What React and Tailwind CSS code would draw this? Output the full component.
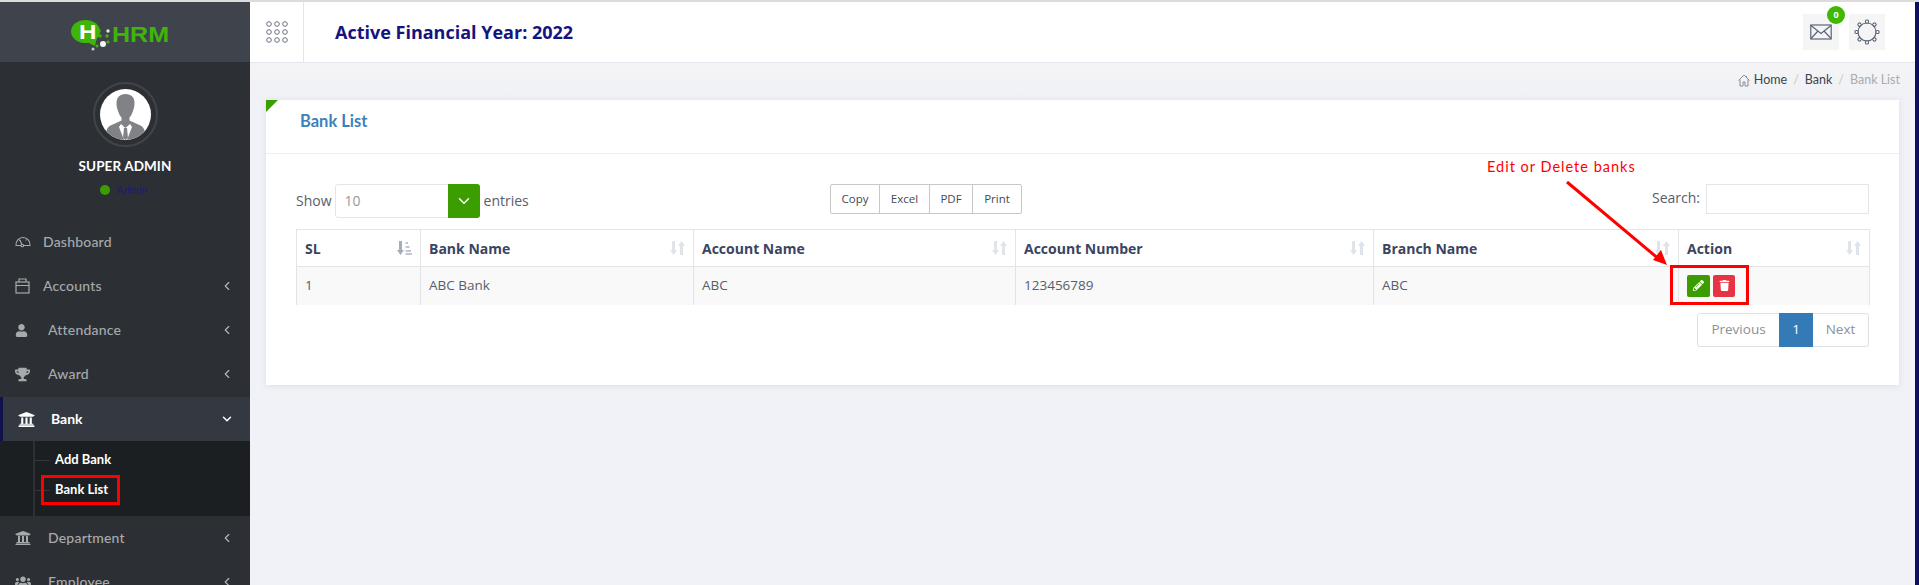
import React from 'react';
import { FaUser, FaTrophy, FaUniversity, FaUsers, FaPencilAlt, FaTrash } from 'react-icons/fa';
import { ChevronLeft, ChevronDown } from 'lucide-react';

const Logo = () => (
  <div className="relative h-[32px] w-[100px]">
    <svg width="100" height="32" viewBox="0 0 100 32" className="absolute left-0 top-0">
      <ellipse cx="14.500" cy="11.500" rx="14.500" ry="11.500" fill="#3fb509" />
      <path d="M12 20 L24 26 L26 17 Z" fill="#3fb509" />
      <circle cx="28" cy="11" r="1.700" fill="#3fb509" />
      <circle cx="37" cy="11" r="1.700" fill="#dfe6da" />
      <circle cx="29" cy="16" r="1.700" fill="#3fb509" />
      <circle cx="36" cy="16" r="1.700" fill="#3fb509" />
      <circle cx="37" cy="22" r="1.600" fill="#3fb509" />
      <circle cx="32" cy="24" r="3" fill="#f4f4f4" />
      <circle cx="22" cy="23" r="1.800" fill="#3fb509" />
      <circle cx="26" cy="26" r="1.500" fill="#3fb509" />
      <circle cx="22" cy="29" r="1.500" fill="#c9c9c9" />
    </svg>
    <span className="absolute left-[8px] top-[2px] text-[21px] leading-[20px] font-bold text-white origin-left scale-x-[1.15] font-['Liberation_Sans',sans-serif]">H</span>
    <span className="absolute left-[41px] top-[3px] text-[22px] leading-[24px] font-bold text-[#3fb509] origin-left scale-x-[1.14] font-['Liberation_Sans',sans-serif]">HRM</span>
  </div>
);

const Avatar = () => (
  <div className="w-[65px] h-[65px] rounded-full border-[2px] border-[#41454a] flex items-center justify-center">
    <div className="w-[51px] h-[51px] rounded-full bg-white overflow-hidden">
      <svg viewBox="0 0 51 51" width="51" height="51">
        <path d="M25.500 5c-6 0-9 3.500-9 9 0 3 .6 5.500 1.500 8 .8 2.500 2 5 3.500 6.500v3l-11 5c-3 1.500-4 4-4.500 8v7h39v-7c-.5-4-1.500-6.500-4.500-8l-11-5v-3c1.500-1.500 2.700-4 3.500-6.500.9-2.500 1.500-5 1.500-8 0-5.500-3-9-9-9z" fill="#808285" />
        <path d="M21 35l4.500 4 4.500-4 2 3-5 13h-3l-5-13z" fill="#fff" />
        <path d="M24 39h3l1 10-2.500 2-2.500-2z" fill="#808285" />
      </svg>
    </div>
  </div>
);

const GaugeIcon = () => (
  <svg width="16" height="16" viewBox="0 0 16 16" fill="none" stroke="#a7aaad" strokeWidth="1.100">
    <path d="M1 11.500C.6 7 3.700 3.500 8 3.500s7.400 3.500 7 8z" />
    <path d="M7 11l-2-5M4 5.500l.7 1M11.500 5.500l-.7 1" />
    <circle cx="7.300" cy="11.500" r="1.300" fill="#2c3034" />
  </svg>
);

const BoxIcon = () => (
  <svg width="15" height="16" viewBox="0 0 15 16" fill="none" stroke="#a7aaad" strokeWidth="1.200">
    <rect x="1" y="4" width="13" height="11" />
    <path d="M1 7.500h13M4 4V1h7v3" />
  </svg>
);

const menuTop = [
  { label: 'Dashboard', icon: <GaugeIcon />, textClass: 'ml-[12px]' },
  { label: 'Accounts', icon: <BoxIcon />, textClass: 'ml-[13px]', arrow: true },
  { label: 'Attendance', icon: <FaUser size={13} color="#a7aaad" />, textClass: 'ml-[20px]', arrow: true },
  { label: 'Award', icon: <FaTrophy size={15} color="#a7aaad" />, textClass: 'ml-[18px]', arrow: true },
];

const MenuItem = ({ label, icon, textClass, arrow }) => (
  <div className="h-[44px] flex items-center pl-[15px] pr-[16px] text-[#a7aaad]">
    <span className="flex justify-start">{icon}</span>
    <span className={`${textClass} text-[14px] font-medium tracking-[0.2px] mb-[2px]`}>{label}</span>
    {arrow && <ChevronLeft size={14} strokeWidth={2} className="ml-auto text-[#b5b7b9]" />}
  </div>
);

const Sidebar = () => (
  <aside className="w-[250px] shrink-0 bg-[#2c3034] font-['Lato',sans-serif]">
    <div className="h-[60px] bg-[#3f444c] pl-[71px] pt-[18px]">
      <Logo />
    </div>
    <div className="h-[158px] flex flex-col items-center pt-[20px]">
      <Avatar />
      <div className="mt-[8px] text-white font-bold text-[13.500px] tracking-[0.1px] leading-[22px]">SUPER ADMIN</div>
      <div className="mt-[6px] flex items-center gap-[6px] mr-[2px] leading-[14px]">
        <span className="w-[10px] h-[10px] rounded-full bg-[#3c9d00]" />
        <span className="text-[11px] text-[#1c1c72]">Admin</span>
      </div>
    </div>
    {menuTop.map((m) => <MenuItem key={m.label} {...m} />)}
    <div className="mt-[1px] h-[44px] bg-[#343841] border-l-[3px] border-[#12124a] flex items-center pl-[15px] pr-[16px] text-white">
      <FaUniversity size={17} color="#fff" />
      <span className="ml-[16px] text-[14px] font-bold mb-[2px]">Bank</span>
      <ChevronDown size={14} strokeWidth={2.500} className="ml-auto" />
    </div>
    <div className="h-[75px] bg-[#1c1f22] pl-[33px]">
      <div className="h-full border-l-[2px] border-[#2d3135] pt-[4px]">
        <div className="h-[30px] flex items-center">
          <span className="w-[15px] h-[1px] bg-[#33373b]" />
          <span className="ml-[5px] text-white text-[13px] font-bold">Add Bank</span>
        </div>
        <div className="h-[30px] flex items-center">
          <span className="w-[15px] h-[1px] bg-[#33373b]" />
          <span className="ml-[5px] text-white text-[13px] font-bold">Bank List</span>
        </div>
      </div>
    </div>
    <MenuItem label="Department" icon={<FaUniversity size={16} color="#a7aaad" />} textClass="ml-[17px]" arrow />
    <MenuItem label="Employee" icon={<FaUsers size={16} color="#a7aaad" />} textClass="ml-[17px]" arrow />
  </aside>
);

const DotsIcon = () => (
  <svg width="22" height="24" viewBox="0 0 22 24" fill="none" stroke="#6c7180" strokeWidth="1">
    {[3, 11, 19].map((x) => [4, 12, 20].map((y) => <circle key={`${x}-${y}`} cx={x} cy={y} r="2.300" />))}
  </svg>
);

const MailIcon = () => (
  <svg width="22" height="16" viewBox="0 0 22 16" fill="none" stroke="#5b6478" strokeWidth="1.200">
    <rect x="0.800" y="1" width="20.400" height="14" />
    <path d="M1 1.500l10 8 10-8M1 14.500l7-7.500M21 14.500l-7-7.500" />
  </svg>
);

const GearIcon = () => (
  <svg width="26" height="26" viewBox="0 0 26 26" fill="none" stroke="#5b6478" strokeWidth="1.100">
    <circle cx="13" cy="13" r="9" />
    {[0, 45, 90, 135, 180, 225, 270, 315].map((a) => (
      <rect key={a} x="11.500" y="1" width="3" height="3" rx="1" transform={`rotate(${a} 13 13)`} fill="#fff" />
    ))}
  </svg>
);

const Header = () => (
  <header className="h-[61px] bg-white border-b border-[#e2e7ee] flex items-center shrink-0">
    <div className="w-[54px] h-full border-r border-[#e2e7ee] flex items-center justify-center">
      <DotsIcon />
    </div>
    <h1 className="ml-[31px] text-[18px] font-bold text-[#14147e] font-['Open_Sans',sans-serif]">Active Financial Year: 2022</h1>
    <div className="ml-auto flex items-center gap-[10px] mr-[30px]">
      <div className="relative w-[36px] h-[36px] bg-[#f5f5f5] flex items-center justify-center">
        <MailIcon />
        <span className="absolute -top-[8px] -right-[6px] w-[18px] h-[18px] rounded-full bg-[#41b800] text-white text-[9px] font-bold flex items-center justify-center font-['Open_Sans',sans-serif]">0</span>
      </div>
      <div className="w-[36px] h-[36px] bg-[#f5f5f5] flex items-center justify-center">
        <GearIcon />
      </div>
    </div>
  </header>
);

const HomeIcon = () => (
  <svg width="12" height="13" viewBox="0 0 12 13" fill="none" stroke="#7d8288" strokeWidth="0.900">
    <path d="M0.500 6.500L6 1l5.500 5.500M2 5.500V12h3V8h2v4h3V5.500M8.500 2v1.500" />
  </svg>
);

const Breadcrumb = () => (
  <div className="h-[37px] pb-[3px] flex items-center justify-end pr-[15px] bg-gradient-to-b from-[#f4f4f5] to-[#f0f1f5] font-['Lato',sans-serif] text-[12.500px] text-[#3c4350]">
    <HomeIcon />
    <span className="ml-[4px]">Home</span>
    <span className="mx-[6px] text-[#c5c7ca]">/</span>
    <span>Bank</span>
    <span className="mx-[6px] text-[#c5c7ca]">/</span>
    <span className="text-[#a9acb0]">Bank List</span>
  </div>
);

const SortIcon = ({ active }) => (
  <svg width="15" height="16" viewBox="0 0 15 16" className="shrink-0">
    <path d="M2 1h3v9h2L3.500 15 0 10h2z" fill={active ? '#a5adbc' : '#dfe3ea'} />
    {active ? (
      <path d="M8.500 2h2.500v2H8.500zM8.500 6h4v2h-4zM8.500 10h5.500v2H8.500zM8.500 13h6.500v2H8.500z" fill="#c1c7d2" />
    ) : (
      <path d="M10 15h3V6h2L11.500 1 8 6h2z" fill="#dfe3ea" />
    )}
  </svg>
);

const columns = [
  { label: 'SL', value: '1', active: true },
  { label: 'Bank Name', value: 'ABC Bank' },
  { label: 'Account Name', value: 'ABC' },
  { label: 'Account Number', value: '123456789' },
  { label: 'Branch Name', value: 'ABC' },
];

const BankTable = () => (
  <table className="w-[1573px] table-fixed border-collapse font-['Open_Sans',sans-serif] text-[13.500px]">
    <colgroup>
      <col className="w-[124px]" />
      <col className="w-[273px]" />
      <col className="w-[322px]" />
      <col className="w-[358px]" />
      <col className="w-[305px]" />
      <col className="w-[191px]" />
    </colgroup>
    <thead>
      <tr className="h-[37px] text-[14px]">
        {columns.map((c) => (
          <th key={c.label} className="border border-[#e3e4e6] px-[8px] text-left font-bold text-[#3b4460]">
            <div className="flex items-center justify-between">
              {c.label}
              <SortIcon active={c.active} />
            </div>
          </th>
        ))}
        <th className="border border-[#e3e4e6] px-[8px] text-left font-bold text-[#3b4460]">
          <div className="flex items-center justify-between">Action<SortIcon /></div>
        </th>
      </tr>
    </thead>
    <tbody>
      <tr className="h-[38px] bg-[#f9f9f9] text-[#585d6b]">
        {columns.map((c) => (
          <td key={c.label} className="border-x border-[#e3e4e6] px-[8px] pb-[2px]">{c.value}</td>
        ))}
        <td className="border-x border-[#e3e4e6] px-[8px]">
          <div className="flex gap-[3px]">
            <button className="w-[23px] h-[22px] rounded-[2px] bg-[#3c9d00] flex items-center justify-center"><FaPencilAlt size={11} color="#fff" /></button>
            <button className="w-[22px] h-[22px] rounded-[2px] bg-[#e73444] flex items-center justify-center"><FaTrash size={11} color="#fff" /></button>
          </div>
        </td>
      </tr>
    </tbody>
  </table>
);

const Card = () => (
  <section className="relative mx-[16px] h-[285px] bg-white shadow-[0_1px_6px_rgba(180,185,205,0.35)]">
    <div className="absolute left-0 top-0 w-0 h-0 border-t-[12px] border-r-[12px] border-t-[#3c9d00] border-r-transparent" />
    <div className="h-[54px] border-b border-[#eceef0] pl-[34px] pt-[9px]">
      <h2 className="text-[16.500px] leading-[24px] font-bold text-[#3d80bb] font-['Lato',sans-serif]">Bank List</h2>
    </div>
    <div className="px-[30px] pt-[30px] font-['Open_Sans',sans-serif] text-[14px] text-[#585d6b]">
      <div className="grid grid-cols-[534px_1fr_auto] items-start h-[45px]">
        <div className="flex items-center h-[34px]">
          <span className="mb-[2px]">Show</span>
          <div className="ml-[3px] w-[145px] h-[34px] flex border border-[#e5e5e5] rounded-[3px]">
            <span className="flex-1 pl-[9px] leading-[32px] text-[#9a9a9a]">10</span>
            <span className="w-[32px] -m-[1px] rounded-r-[3px] bg-[#3c9d00] flex items-center justify-center"><ChevronDown size={18} color="#fff" /></span>
          </div>
          <span className="ml-[4px] mb-[2px]">entries</span>
        </div>
        <div className="flex">
          <div className="flex h-[30px] border border-[#c6c7c9] rounded-[2px] text-[11.500px] text-[#444a55] items-stretch">
            <span className="w-[49px] flex items-center justify-center border-r border-[#c6c7c9]">Copy</span>
            <span className="w-[50px] flex items-center justify-center border-r border-[#c6c7c9]">Excel</span>
            <span className="w-[43px] flex items-center justify-center border-r border-[#c6c7c9]">PDF</span>
            <span className="w-[48px] flex items-center justify-center">Print</span>
          </div>
        </div>
        <div className="flex items-start">
          <span className="mt-[3px] mr-[6px]">Search:</span>
          <div className="w-[163px] h-[30px] border border-[#e5e5e5]" />
        </div>
      </div>
      <BankTable />
      <div className="mt-[8px] flex justify-end">
        <div className="flex h-[34px] border border-[#e0e1e3] rounded-[3px] text-[13.500px] text-[#8a8f98]">
          <span className="w-[81px] flex items-center justify-center">Previous</span>
          <span className="w-[34px] -my-[1px] bg-[#337ab7] text-white flex items-center justify-center">1</span>
          <span className="w-[55px] flex items-center justify-center">Next</span>
        </div>
      </div>
    </div>
  </section>
);

const Annotations = () => (
  <>
    <span className="absolute left-[1487px] top-[158px] text-[14.500px] leading-[18px] tracking-[1px] text-[#ff0000] font-['Lato',sans-serif]">Edit or Delete banks</span>
    <svg className="absolute left-[1560px] top-[175px]" width="115" height="95" viewBox="0 0 115 95">
      <path d="M7 7L100 85" stroke="#ff0000" strokeWidth="3" />
      <path d="M107 90L93 85L101 75Z" fill="#ff0000" />
    </svg>
    <div className="absolute left-[1670px] top-[265px] w-[79px] h-[40px] border-[3px] border-[#ff0000]" />
    <div className="absolute left-[41px] top-[475px] w-[79px] h-[30px] border-[3px] border-[#ff0000]" />
  </>
);

export default function App() {
  return (
    <div className="relative w-[1919px] h-[585px] overflow-hidden bg-[#f1f2f7]">
      <div className="h-[2px] bg-[#dcdcdc]" />
      <div className="flex h-[583px]">
        <Sidebar />
        <main className="flex-1 min-w-0 flex flex-col">
          <Header />
          <Breadcrumb />
          <Card />
        </main>
        <div className="w-[4px] bg-[#0d1060]" />
      </div>
      <Annotations />
    </div>
  );
}
